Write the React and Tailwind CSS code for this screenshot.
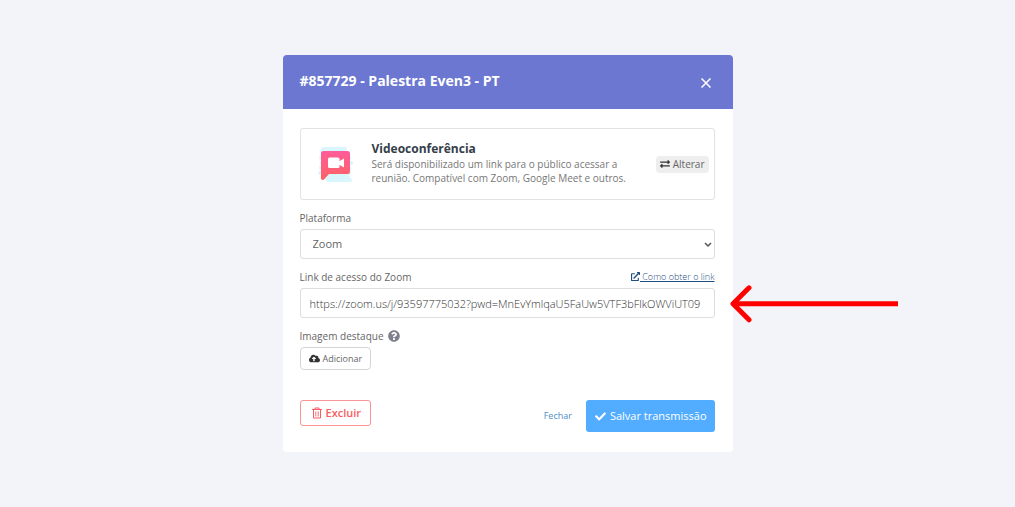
import { FaExchangeAlt, FaExternalLinkAlt, FaQuestionCircle, FaCloudUploadAlt, FaCheck } from 'react-icons/fa';

function VideoIcon() {
  return (
    <svg viewBox="0 0 36 36" className="h-9 w-9 shrink-0" aria-hidden="true">
      <defs>
        <linearGradient id="bubble" x1="0" y1="0" x2="0" y2="1">
          <stop offset="0" stopColor="#ff5c9a" />
          <stop offset="1" stopColor="#ff6262" />
        </linearGradient>
      </defs>
      <g stroke="#d9f6fc" strokeWidth="4" strokeLinecap="round">
        <path d="M5 3H27M4 7H29M3 12H31M4 17H33M3 22H31M2 27H31M5 31H30M10 34H32" />
      </g>
      <path d="M5.500 5H29.500Q32 5 32 7.500V25.500Q32 28 29.500 28H11L6 33.500Q3 35 3 32V7.500Q3 5 5.500 5Z" fill="url(#bubble)" />
      <rect x="10" y="11.500" width="11.500" height="10.500" rx="1.500" fill="#fff" />
      <path d="M20 16L26 12.500V21.500L20 18Z" fill="#fff" />
    </svg>
  );
}

function TrashIcon() {
  return (
    <svg viewBox="0 0 10 12" className="h-3 w-2.5" fill="none" stroke="currentColor" aria-hidden="true">
      <path d="M0 2.500H10M3 2.500V1H7V2.500M1.500 2.500V11H8.500V2.500" />
      <path d="M3.800 4.500V9.500M6.200 4.500V9.500" strokeWidth="0.900" />
    </svg>
  );
}

function Pointer() {
  return (
    <svg
      viewBox="0 0 169 40"
      className="pointer-events-none absolute top-1/2 left-full ml-[15px] h-10 w-[169px] -translate-y-1/2"
      fill="none"
      stroke="#ff0000"
      strokeWidth="5"
      aria-hidden="true"
    >
      <path d="M3 20.800H168" />
      <path d="M19 4.800L3 20.800L19 36.800" strokeLinecap="round" strokeLinejoin="round" />
    </svg>
  );
}

export default function App() {
  return (
    <main className="flex min-h-screen items-center justify-center bg-[#f3f4f9] font-['Open_Sans','Noto_Sans',sans-serif] text-[10px] text-[#666]">
      <section role="dialog" aria-labelledby="title" className="w-full max-w-[450px] rounded bg-white">
        <header className="flex items-center justify-between rounded-t bg-[#6b77d1] px-[17px] pt-3 pb-[14px] text-white">
          <h1 id="title" className="text-sm leading-7 font-bold">#857729 - Palestra Even3 - PT</h1>
          <button type="button" aria-label="Fechar janela" className="mt-1 mr-[5px]">
            <svg viewBox="0 0 10 10" className="h-2.5 w-2.5" stroke="currentColor" strokeWidth="1.500" aria-hidden="true">
              <path d="M0.500 0.500L9.500 9.500M9.500 0.500L0.500 9.500" />
            </svg>
          </button>
        </header>

        <form className="pt-[19px] pr-[18px] pb-5 pl-[17px]" onSubmit={(e) => e.preventDefault()}>
          <div className="flex h-[72px] items-center rounded-[3px] border border-[#e2e2e2] pr-[5px] pl-[17px]">
            <VideoIcon />
            <div className="ml-[18px] flex-1 pb-0.5">
              <h2 className="text-xs leading-4 font-bold text-[#353e49]">Videoconferência</h2>
              <p className="max-w-[260px] leading-[14px] text-[#777]">
                Será disponibilizado um link para o público acessar a reunião. Compatível com Zoom, Google Meet e outros.
              </p>
            </div>
            <button type="button" className="flex h-[17px] items-center gap-[3px] rounded-sm bg-[#eee] px-1">
              <FaExchangeAlt className="text-[#333]" />
              Alterar
            </button>
          </div>

          <label htmlFor="platform" className="mt-2.5 mb-[3px] block leading-4">Plataforma</label>
          <div className="relative">
            <select id="platform" className="block h-[30px] w-full appearance-none rounded-[3px] border border-[#ddd] bg-white px-3 text-[11px]">
              <option>Zoom</option>
            </select>
            <svg viewBox="0 0 8 6" className="pointer-events-none absolute top-[13px] right-[3px] h-1.5 w-2" fill="none" stroke="#555" strokeWidth="1.500" aria-hidden="true">
              <path d="M1 1L4 4L7 1" />
            </svg>
          </div>

          <div className="mt-2.5 mb-[3px] flex items-center justify-between leading-4">
            <label htmlFor="link">Link de acesso do Zoom</label>
            <a href="#ajuda" className="text-[9px] font-light text-[#1f4f80] underline">
              <FaExternalLinkAlt className="inline-block align-[-1px]" />
              {' Como obter o link'}
            </a>
          </div>
          <div className="relative">
            <input
              id="link"
              type="text"
              defaultValue="https://zoom.us/j/93597775032?pwd=MnEvYmlqaU5FaUw5VTF3bFlkOWViUT09"
              className="block h-[30px] w-full rounded-[3px] border border-[#ddd] bg-white px-[9px] text-[11px] font-light text-[#333]"
            />
            <Pointer />
          </div>

          <div className="mt-2.5 mb-[3px] flex items-center gap-1 leading-4">
            <label htmlFor="image">Imagem destaque</label>
            <FaQuestionCircle className="text-xs text-[#80808c]" />
          </div>
          <button id="image" type="button" className="flex h-[23px] items-center gap-[3px] rounded-sm border border-[#d5d5d5] px-2 text-[9px]">
            <FaCloudUploadAlt className="text-[11px] text-[#333]" />
            Adicionar
          </button>

          <footer className="mt-[30px] flex items-start">
            <button type="button" className="flex h-[26px] items-center gap-1 rounded-[3px] border border-[#fa9494] pr-[9px] pl-[11px] text-[11px] font-semibold text-[#f75c62]">
              <TrashIcon />
              Excluir
            </button>
            <button type="button" className="mr-[14px] ml-auto h-8 text-[9px] text-[#4d8fc7]">Fechar</button>
            <button type="submit" className="flex h-8 items-center gap-1 rounded-[3px] bg-[#52acff] pr-2 pl-[9px] text-[11px] text-white">
              <FaCheck />
              Salvar transmissão
            </button>
          </footer>
        </form>
      </section>
    </main>
  );
}
